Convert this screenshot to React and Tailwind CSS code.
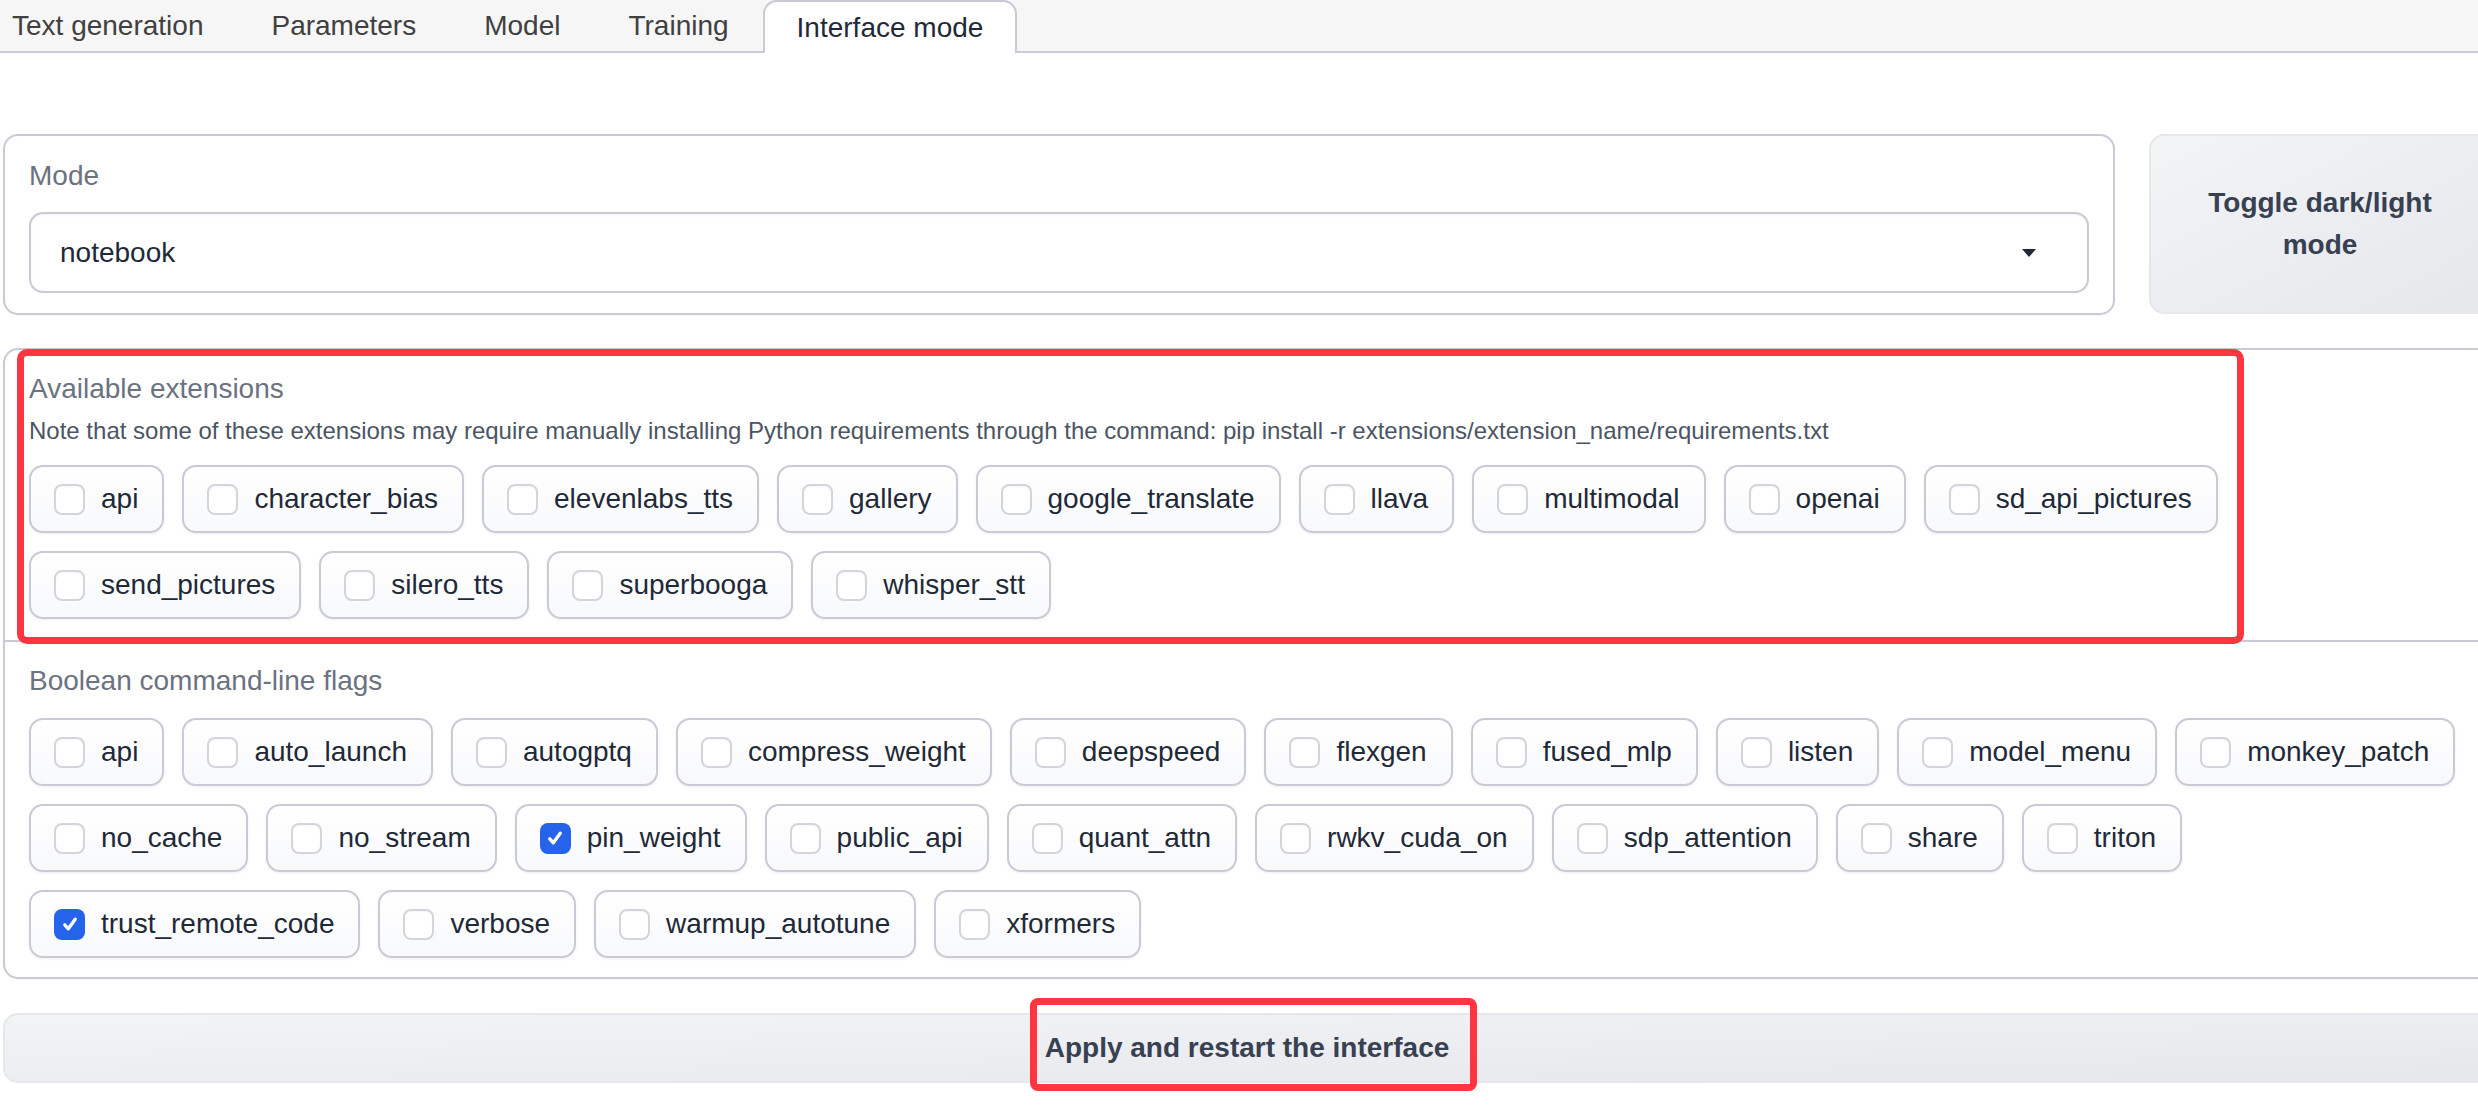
import React, { useState } from 'react'

const TABS = ['Text generation', 'Parameters', 'Model', 'Training', 'Interface mode']

const EXTENSIONS = [
  'api', 'character_bias', 'elevenlabs_tts', 'gallery', 'google_translate', 'llava',
  'multimodal', 'openai', 'sd_api_pictures', 'send_pictures', 'silero_tts', 'superbooga', 'whisper_stt',
]

const FLAGS = [
  'api', 'auto_launch', 'autogptq', 'compress_weight', 'deepspeed', 'flexgen', 'fused_mlp',
  'listen', 'model_menu', 'monkey_patch', 'no_cache', 'no_stream', 'pin_weight', 'public_api',
  'quant_attn', 'rwkv_cuda_on', 'sdp_attention', 'share', 'triton', 'trust_remote_code',
  'verbose', 'warmup_autotune', 'xformers',
]

const Box = ({ checked }) =>
  checked ? (
    <span className="flex items-center justify-center w-[31px] h-[31px] rounded-[8px] bg-[#2563eb] shrink-0">
      <svg width="22" height="22" viewBox="0 0 16 16" fill="none">
        <path d="M4.2 8.6l2.6 2.9 5-7" stroke="white" strokeWidth="2.4" strokeLinecap="round" strokeLinejoin="round" />
      </svg>
    </span>
  ) : (
    <span className="w-[31px] h-[31px] rounded-[8px] border-2 border-[#d4d5dc] bg-white shadow-[inset_0_1px_2px_rgba(0,0,0,0.04)] shrink-0" />
  )

const Chip = ({ label, checked, onToggle }) => (
  <button
    type="button"
    onClick={onToggle}
    className="flex items-center gap-[16px] h-[68px] pl-[23px] pr-[24px] border-2 border-[#cbc9d6] rounded-[14px] bg-linear-to-b from-white to-[#f8f9fb] shadow-[0_1px_3px_rgba(0,0,0,0.07)] text-[28px] text-[#1f2937]"
  >
    <Box checked={checked} />
    <span>{label}</span>
  </button>
)

const ChipGroup = ({ items, checked, onToggle }) => (
  <div className="flex flex-wrap gap-[18px]">
    {items.map((name) => (
      <Chip key={name} label={name} checked={!!checked[name]} onToggle={() => onToggle(name)} />
    ))}
  </div>
)

export default function App() {
  const [activeTab] = useState('Interface mode')
  const [exts, setExts] = useState({})
  const [flags, setFlags] = useState({ pin_weight: true, trust_remote_code: true })

  const toggleExt = (k) => setExts((s) => ({ ...s, [k]: !s[k] }))
  const toggleFlag = (k) => setFlags((s) => ({ ...s, [k]: !s[k] }))

  return (
    <div className="relative w-[2478px] min-h-[1114px] overflow-hidden bg-white font-['Liberation_Sans',Arial,sans-serif]">
      {/* tabs */}
      <div className="h-[53px] bg-[#f6f6f6] border-b-2 border-[#cbc9d6]">
        <div className="flex items-end h-full -ml-[22px]">
          {TABS.map((t) =>
            t === activeTab ? (
              <div
                key={t}
                className="flex items-center h-[53px] -mb-[2px] px-[32px] bg-white border-2 border-b-0 border-[#cbc9d6] rounded-t-[14px] text-[28px] text-[#1f2937]"
              >
                {t}
              </div>
            ) : (
              <div key={t} className="flex items-center h-full px-[34px] text-[28px] text-[#404040]">
                {t}
              </div>
            )
          )}
        </div>
      </div>

      <div className="ml-[3px] w-[2488px] pt-[81px]">
        {/* mode row */}
        <div className="flex gap-[34px] h-[181px]">
          <div className="flex-1 border-2 border-[#cbc9d6] rounded-[15px] px-[24px] pt-[19px] shadow-[0_1px_2px_rgba(0,0,0,0.04)]">
            <div className="text-[28px] leading-[42px] text-[#6b7280]">Mode</div>
            <div className="mt-[15px] h-[81px] flex items-center justify-between pl-[29px] pr-[51px] border-2 border-[#cbc9d6] rounded-[14px] shadow-[inset_0_1px_3px_rgba(0,0,0,0.05)]">
              <span className="text-[28px] text-[#1f2937]">notebook</span>
              <svg width="14" height="8" viewBox="0 0 14 8">
                <path d="M0 0h14L7 8z" fill="#1f2937" />
              </svg>
            </div>
          </div>
          <button
            type="button"
            className="w-[342px] h-[180px] shrink-0 rounded-[15px] border-2 border-[#e5e7eb] bg-linear-to-br from-[#f3f4f6] to-[#e5e7eb] px-[24px] text-[28px] leading-[42px] font-bold text-[#374151] text-center"
          >
            Toggle dark/light mode
          </button>
        </div>

        {/* extensions + flags */}
        <div className="mt-[33px] border-2 border-[#cbc9d6] rounded-[15px] shadow-[0_1px_2px_rgba(0,0,0,0.04)]">
          <div className="px-[24px] pt-[18px] pb-[21px]">
            <div className="text-[28px] leading-[42px] text-[#6b7280]">Available extensions</div>
            <div className="mt-[3px] text-[24px] leading-[36px] text-[#4b5563]">
              Note that some of these extensions may require manually installing Python requirements through the command: pip install -r extensions/extension_name/requirements.txt
            </div>
            <div className="mt-[16px]">
              <ChipGroup items={EXTENSIONS} checked={exts} onToggle={toggleExt} />
            </div>
          </div>
          <div className="border-t-2 border-[#cbc9d6] px-[24px] pt-[18px] pb-[19px]">
            <div className="text-[28px] leading-[42px] text-[#6b7280]">Boolean command-line flags</div>
            <div className="mt-[16px]">
              <ChipGroup items={FLAGS} checked={flags} onToggle={toggleFlag} />
            </div>
          </div>
        </div>

        {/* apply */}
        <button
          type="button"
          className="mt-[34px] w-full h-[70px] rounded-[15px] border-2 border-[#e5e7eb] bg-linear-to-br from-[#f3f4f6] to-[#e5e7eb] text-[28px] font-bold text-[#374151]"
        >
          Apply and restart the interface
        </button>
      </div>

      {/* red annotation boxes */}
      <div className="absolute left-[17px] top-[349px] w-[2227px] h-[295px] border-[7px] border-[#ff363f] rounded-[10px] pointer-events-none" />
      <div className="absolute left-[1030px] top-[998px] w-[447px] h-[93px] border-[7px] border-[#ff363f] rounded-[8px] pointer-events-none" />
    </div>
  )
}
